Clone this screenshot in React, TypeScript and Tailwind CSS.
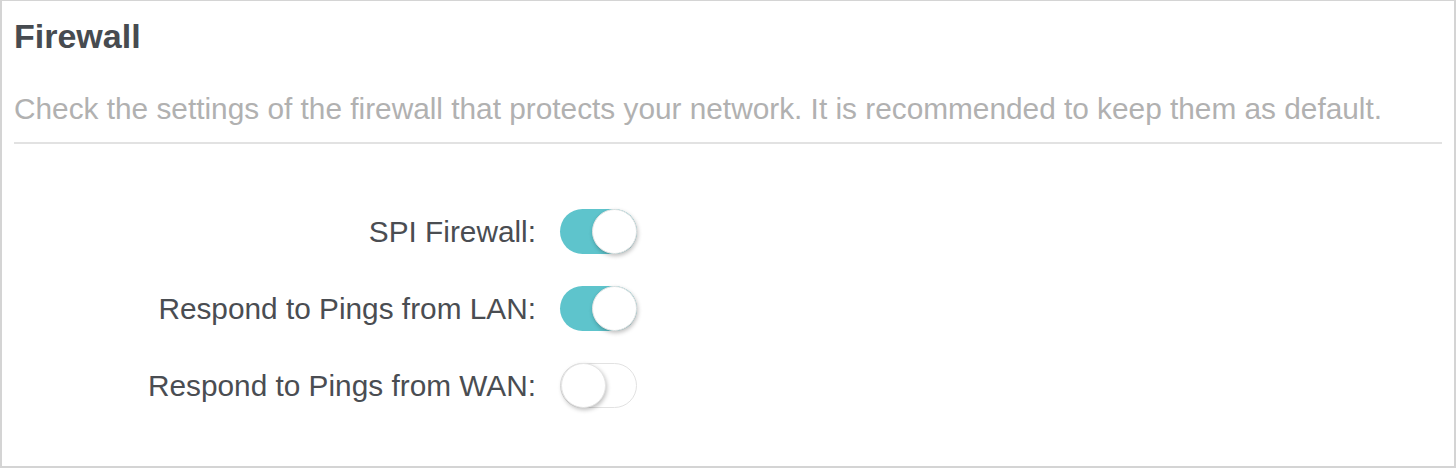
import { useState } from "react";

const rows = [
  { label: "SPI Firewall:", on: true },
  { label: "Respond to Pings from LAN:", on: true },
  { label: "Respond to Pings from WAN:", on: false },
];

function Toggle({ on, onClick }: { on: boolean; onClick: () => void }) {
  return (
    <button
      onClick={onClick}
      className={`flex items-center w-[77px] h-[45px] rounded-full ${
        on
          ? "bg-[#5ec4cc] justify-end"
          : "bg-white border border-[#e2e2e2] justify-start"
      }`}
    >
      <span className="w-[45px] h-[45px] rounded-full bg-white border border-[#e4e4e4] shadow-[1px_2px_4px_rgba(0,0,0,0.25)]" />
    </button>
  );
}

export default function App() {
  const [state, setState] = useState(rows.map((r) => r.on));

  return (
    <div className="w-[1456px] h-[468px] bg-white border-2 border-t border-[#d4d4d4] px-[12px] pt-[15px] font-['Liberation_Sans',Arial,sans-serif]">
      {/* Header */}
      <h1 className="text-[34px] leading-[40px] font-bold text-[#474b50]">Firewall</h1>
      <p className="mt-[35px] text-[29.8px] leading-[35px] text-[#b1b1b1]">
        Check the settings of the firewall that protects your network. It is recommended to keep them as default.
      </p>
      <div className="mt-[16px] h-[2px] bg-[#e2e2e2]" />

      {/* Settings */}
      <div className="mt-[65px] flex flex-col gap-[32px]">
        {rows.map((row, i) => (
          <div key={row.label} className="flex items-center h-[45px]">
            <span className="w-[522px] text-right text-[29.8px] leading-[35px] text-[#4a4d52]">
              {row.label}
            </span>
            <div className="ml-[24px]">
              <Toggle
                on={state[i]}
                onClick={() => setState(state.map((v, j) => (j === i ? !v : v)))}
              />
            </div>
          </div>
        ))}
      </div>
    </div>
  );
}
